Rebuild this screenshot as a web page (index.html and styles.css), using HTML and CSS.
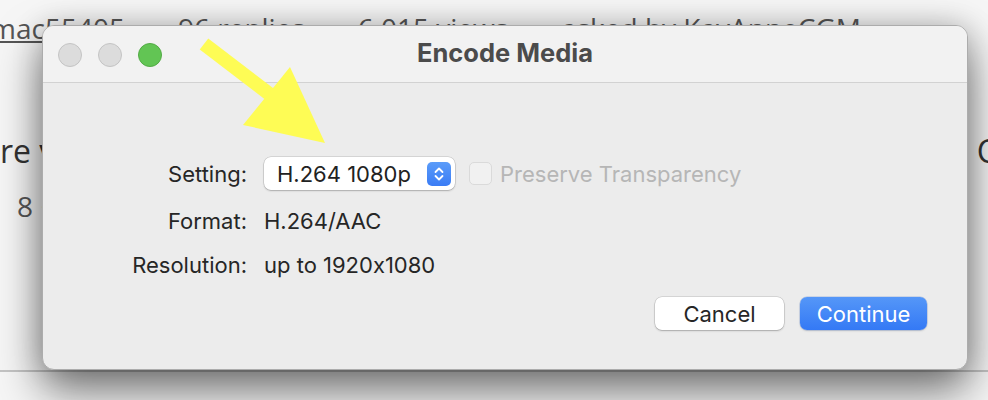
FILE: index.html
```html
<!DOCTYPE html>
<html>
<head>
<meta charset="utf-8">
<link rel="stylesheet" href="styles.css">
</head>
<body>
<div class="page">
  <div class="meta">
    <span class="user">mac55405</span>
    <span>96 replies</span>
    <span>6,015 views</span>
    <span>asked by KayAnneCGM</span>
  </div>
  <div class="question"><span>re v</span><span>C</span></div>
  <div class="sub">8 ·</div>
  <div class="rule"></div>
</div>

<div class="dialog">
  <div class="titlebar">
    <div class="lights">
      <span class="light"></span>
      <span class="light"></span>
      <span class="light green"></span>
    </div>
    <div class="title">Encode Media</div>
    <div></div>
  </div>
  <div class="content">
    <div class="form">
      <div class="label">Setting:</div>
      <div class="field">
        <div class="popup">
          <span>H.264 1080p</span>
          <span class="stepper">
            <svg width="24" height="24" viewBox="0 0 24 24"><path d="M8.5 10 L12 6.5 L15.5 10 M8.5 14 L12 17.5 L15.5 14" fill="none" stroke="#fff" stroke-width="1.8" stroke-linecap="round" stroke-linejoin="round"/></svg>
          </span>
        </div>
        <span class="check"></span>
        <span class="disabled">Preserve Transparency</span>
      </div>
      <div class="label">Format:</div>
      <div class="value">H.264/AAC</div>
      <div class="label">Resolution:</div>
      <div class="value">up to 1920x1080</div>
    </div>
    <div class="buttons">
      <button class="btn">Cancel</button>
      <button class="btn primary">Continue</button>
    </div>
  </div>
</div>

<svg class="arrow" width="988" height="400" viewBox="0 0 988 400">
  <line x1="204" y1="44" x2="272" y2="96" stroke="#fefc55" stroke-width="14"/>
  <polygon points="243,125 290,67 325,143" fill="#fefc55"/>
</svg>
</body>
</html>
```
FILE: styles.css
```css
html, body {
  margin: 0;
  padding: 0;
}
body {
  width: 988px;
  height: 400px;
  overflow: hidden;
  background: #f6f6f6;
  position: relative;
  font-family: "Open Sans", "DejaVu Sans", sans-serif;
}
.page {
  color: #555;
}
.meta {
  display: flex;
  gap: 53px;
  margin-left: -10px;
  padding-top: 9px;
  font-size: 28px;
  line-height: 38px;
  white-space: nowrap;
}
.user {
  text-decoration: underline;
}
.question {
  display: flex;
  justify-content: space-between;
  margin-top: 84px;
  margin-right: -9px;
  font-size: 32px;
  line-height: 40px;
  color: #333;
}
.sub {
  margin-top: 16px;
  padding-left: 17px;
  font-size: 28px;
  line-height: 38px;
}
.rule {
  margin-top: 145px;
  border-top: 2px solid #c4c4c4;
}

.dialog {
  position: absolute;
  left: 42px;
  top: 25px;
  width: 926px;
  height: 345px;
  box-sizing: border-box;
  border: 1px solid #acacac;
  border-radius: 12px;
  background: #ececec;
  overflow: hidden;
  box-shadow: 0 22px 45px rgba(0, 0, 0, 0.5), 0 0 30px rgba(0, 0, 0, 0.2);
  font-family: Inter, "Liberation Sans", sans-serif;
  font-feature-settings: "calt" 0;
  color: #262626;
  display: flex;
  flex-direction: column;
}
.titlebar {
  height: 56px;
  flex: none;
  background: #f2f2f2;
  border-bottom: 1px solid #d2d2d2;
  display: grid;
  grid-template-columns: 1fr auto 1fr;
  align-items: center;
}
.lights {
  display: flex;
  gap: 16px;
  padding-left: 15px;
  padding-top: 1px;
}
.light {
  width: 22px;
  height: 22px;
  border-radius: 50%;
  background: #dcdcdc;
  border: 1px solid #c4c4c4;
}
.light.green {
  background: #62c554;
  border-color: #53ab45;
}
.title {
  font-size: 25.5px;
  font-weight: 700;
  color: #4b4b4b;
  padding-bottom: 4px;
}
.content {
  flex: 1;
  display: flex;
  flex-direction: column;
  padding: 74px 40px 0 0;
}
.form {
  display: grid;
  grid-template-columns: 204px auto;
  column-gap: 17px;
  row-gap: 18px;
  align-items: center;
  font-size: 22px;
  line-height: 26px;
}
.label {
  text-align: right;
}
.field {
  display: flex;
  align-items: center;
  height: 33px;
}
.popup {
  width: 191px;
  height: 33px;
  box-sizing: border-box;
  background: #fff;
  border-radius: 7px;
  box-shadow: 0 0 0 0.5px rgba(0, 0, 0, 0.18), 0 1px 2px rgba(0, 0, 0, 0.2);
  display: flex;
  align-items: center;
  justify-content: space-between;
  padding: 0 4px 0 13px;
  color: #222;
}
.stepper {
  width: 24px;
  height: 24px;
  border-radius: 5px;
  background: linear-gradient(#5b9cf9, #3a7cf5);
  display: flex;
}
.check {
  width: 21px;
  height: 21px;
  margin-left: 14px;
  border: 1px solid #dadada;
  border-radius: 5px;
  background: #f1f1f1;
}
.disabled {
  margin-left: 8px;
  color: #b6b6b6;
}
.buttons {
  display: flex;
  justify-content: flex-end;
  gap: 16px;
  margin-top: 19px;
}
.btn {
  font-family: Inter, "Liberation Sans", sans-serif;
  font-size: 22px;
  height: 33px;
  border: none;
  border-radius: 7px;
  background: #fff;
  color: #262626;
  box-shadow: 0 0 0 0.5px rgba(0, 0, 0, 0.18), 0 1px 2px rgba(0, 0, 0, 0.22);
  width: 129px;
  padding: 0;
}
.btn.primary {
  width: 127px;
  color: #fff;
  background: linear-gradient(#5597f8, #3479f5);
  box-shadow: 0 0 0 0.5px rgba(30, 90, 200, 0.3), 0 1px 2px rgba(0, 0, 0, 0.15);
}
.arrow {
  position: absolute;
  left: 0;
  top: 0;
}
```
